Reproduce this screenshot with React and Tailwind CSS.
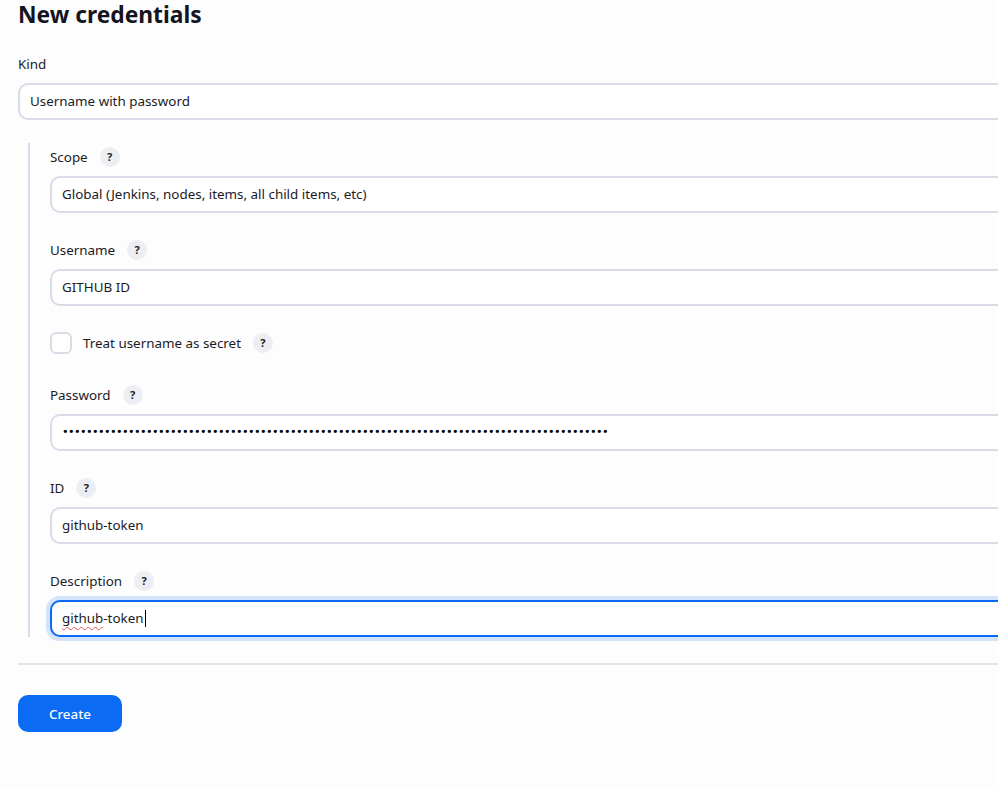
import React from "react";

const font = { fontFamily: '"Noto Sans", "Noto Sans CJK KR", sans-serif' };

function Help() {
  return (
    <span className="ml-[12px] inline-flex h-[20px] w-[20px] items-center justify-center rounded-full bg-[#eceef3] text-[11px] font-bold text-[#222]">
      ?
    </span>
  );
}

function Label({ children, help = true }) {
  return (
    <div className="flex h-[20px] items-center text-[13.4px] text-[#1b1b1f]">
      <span>{children}</span>
      {help && <Help />}
    </div>
  );
}

function Field({ children, focused }) {
  return (
    <div
      className={
        focused
          ? "-mr-[40px] flex h-[37px] items-center rounded-[10px] border-2 border-[#0b6af5] bg-white pl-[10px] text-[13.4px] text-[#1b1b1f] shadow-[0_0_0_4px_#d4e3fc]"
          : "-mr-[40px] flex h-[37px] items-center rounded-[10px] border-2 border-[#d9dce8] bg-white pl-[10px] text-[13.4px] text-[#1b1b1f]"
      }
    >
      {children}
    </div>
  );
}

export default function App() {
  const dots = "•".repeat(91);
  return (
    <div className="min-h-[789px] w-[998px] overflow-hidden bg-[#fdfdfd]" style={font}>
      <div className="pl-[18px] pt-[2px]">
        <h1 className="text-[22.8px] font-bold leading-[25px] text-[#14141f]">New credentials</h1>
        <div className="mt-[27px] flex h-[20px] items-center text-[13.4px] text-[#1b1b1f]">Kind</div>
        <div className="mt-[9px]">
          <Field>Username with password</Field>
        </div>
        <div className="mt-[23px] ml-[10px] border-l-2 border-[#d9dce8] pl-[20px] pt-[4px] pb-0">
          <Label>Scope</Label>
          <div className="mt-[9px]">
            <Field>Global (Jenkins, nodes, items, all child items, etc)</Field>
          </div>
          <div className="mt-[27px]">
            <Label>Username</Label>
          </div>
          <div className="mt-[9px]">
            <Field>GITHUB ID</Field>
          </div>
          <div className="mt-[26px] flex items-center">
            <span className="inline-block h-[22px] w-[22px] rounded-[6px] border-2 border-[#d9dce8] bg-white" />
            <span className="ml-[11px] text-[13.4px] text-[#1b1b1f]">Treat username as secret</span>
            <Help />
          </div>
          <div className="mt-[31px]">
            <Label>Password</Label>
          </div>
          <div className="mt-[9px]">
            <Field>
              <span
                className="text-[11px] font-bold tracking-[-0.6px] text-black"
                style={{ fontFamily: '"Liberation Mono", monospace' }}
              >
                {dots}
              </span>
            </Field>
          </div>
          <div className="mt-[27px]">
            <Label>ID</Label>
          </div>
          <div className="mt-[9px]">
            <Field>github-token</Field>
          </div>
          <div className="mt-[27px]">
            <Label>Description</Label>
          </div>
          <div className="mt-[9px]">
            <Field focused>
              <span className="underline decoration-wavy decoration-[#e05555] decoration-1 underline-offset-[3px]">github</span>
              <span>-token</span>
              <span className="ml-[1px] inline-block h-[17px] w-[1px] bg-black" />
            </Field>
          </div>
        </div>
        <div className="mt-[26px] h-[2px] bg-[#e1e4ec]" />
        <button className="mt-[30px] h-[37px] w-[104px] rounded-[10px] bg-[#0b6bf5] pt-[2px] text-[13.4px] font-medium text-white">
          Create
        </button>
      </div>
    </div>
  );
}
